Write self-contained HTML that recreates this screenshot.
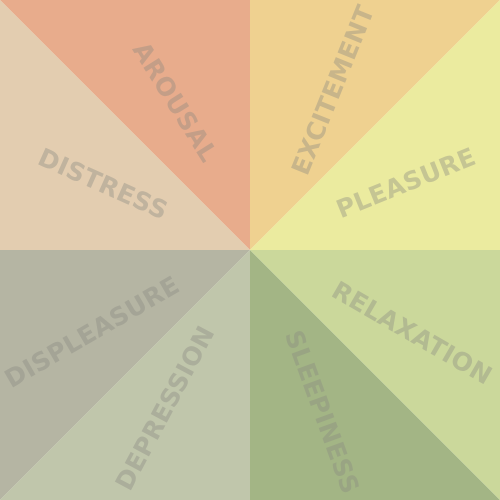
<!DOCTYPE html>
<html><head><style>
html,body{margin:0;padding:0;width:500px;height:500px;overflow:hidden;background:#fff}
svg{display:block}
text{font-family:"DejaVu Sans","Liberation Sans",sans-serif;font-size:25px;font-weight:bold;fill:#8a8a80;fill-opacity:.38;text-anchor:middle;dominant-baseline:central;letter-spacing:0.3px}
</style></head><body>
<svg width="500" height="500" viewBox="0 0 500 500">
<polygon points="0,0 250,0 250,250" fill="#e8ac8c"/>
<polygon points="0,0 0,250 250,250" fill="#e3cdb0"/>
<polygon points="250,0 500,0 250,250" fill="#efd190"/>
<polygon points="500,0 500,250 250,250" fill="#ebeb9f"/>
<polygon points="0,250 250,250 0,500" fill="#b5b5a3"/>
<polygon points="0,500 250,250 250,500" fill="#c0c6ab"/>
<polygon points="250,250 250,500 500,500" fill="#a3b585"/>
<polygon points="250,250 500,250 500,500" fill="#cbd89b"/>
<text transform="translate(175,102) rotate(58)">AROUSAL</text>
<text transform="translate(333,90) rotate(-68)">EXCITEMENT</text>
<text transform="translate(406,183) rotate(-22)">PLEASURE</text>
<text transform="translate(103,184) rotate(24)">DISTRESS</text>
<text transform="translate(92,332) rotate(-30)">DISPLEASURE</text>
<text transform="translate(165,408) rotate(-62)">DEPRESSION</text>
<text transform="translate(322,412) rotate(70)">SLEEPINESS</text>
<text transform="translate(412,333) rotate(30)">RELAXATION</text>
</svg>
</body></html>
